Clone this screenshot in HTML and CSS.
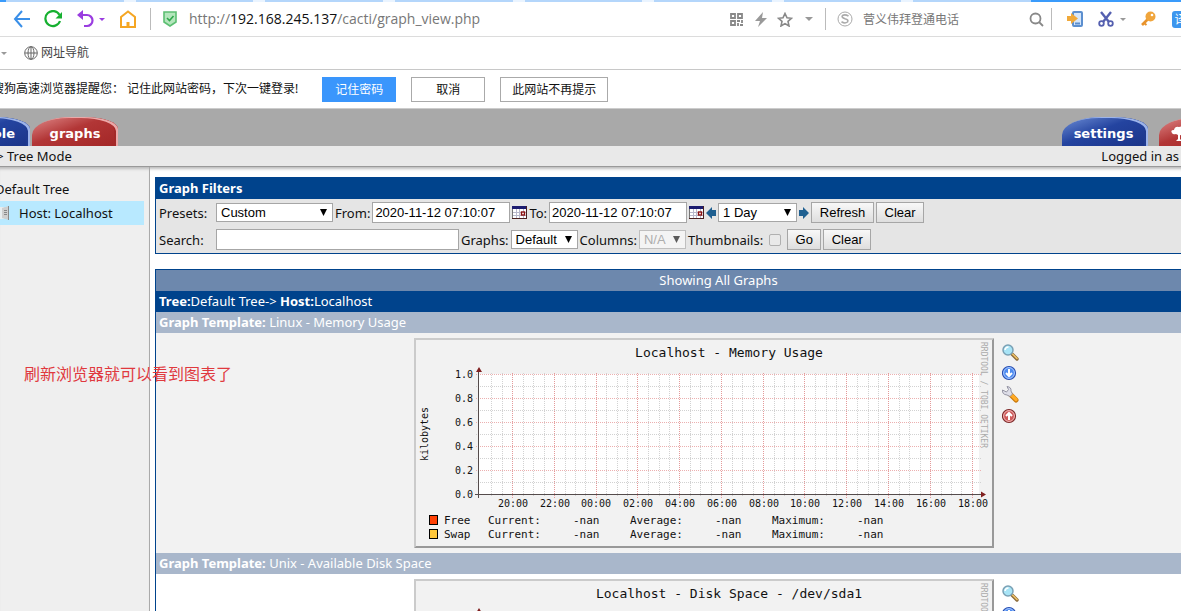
FILE: index.html
```html
<!DOCTYPE html>
<html lang="zh-CN">
<head>
<meta charset="utf-8">
<title>Cacti - graph_view.php</title>
<link rel="stylesheet" href="styles.css">
</head>
<body>
<svg class="defs" aria-hidden="true">
  <defs>
    <g id="chart-frame">
      <rect width="580" height="210" fill="#f2f2f2"/>
      <path d="M0 0H580L578 2H2V208L0 210Z" fill="#cbcbcb"/>
      <path d="M580 0V210H0L2 208H578V2Z" fill="#999"/>
    </g>
    <g id="chart-grid">
      <rect x="65" y="36" width="500" height="121" fill="#fff"/>
      <path d="M62 48.5H568M62 72.5H568M62 96.5H568M62 120.5H568M62 144.5H568" stroke="#d2d2d2" stroke-dasharray="1 1"/>
      <path d="M77.5 35V158M88.5 35V158M109.5 35V158M119.5 35V158M130.5 35V158M151.5 35V158M161.5 35V158M171.5 35V158M192.5 35V158M203.5 35V158M213.5 35V158M234.5 35V158M245.5 35V158M255.5 35V158M276.5 35V158M286.5 35V158M297.5 35V158M318.5 35V158M328.5 35V158M339.5 35V158M360.5 35V158M370.5 35V158M380.5 35V158M401.5 35V158M412.5 35V158M422.5 35V158M443.5 35V158M454.5 35V158M464.5 35V158M485.5 35V158M495.5 35V158M506.5 35V158M527.5 35V158M537.5 35V158M547.5 35V158" stroke="#d2d2d2" stroke-dasharray="1 1"/>
      <path d="M62 36.5H568M62 60.5H568M62 84.5H568M62 108.5H568M62 132.5H568" stroke="#ecb0b0" stroke-dasharray="1 1"/>
      <path d="M98.5 35V160M140.5 35V160M182.5 35V160M223.5 35V160M265.5 35V160M307.5 35V160M349.5 35V160M390.5 35V160M432.5 35V160M474.5 35V160M516.5 35V160M558.5 35V160" stroke="#e49a9a" stroke-dasharray="1 1"/>
      <path d="M64.5 34V160M61 156.5H569" stroke="#554c4c"/>
      <path d="M62 34L65 29L68 34ZM567 153.5L572 156.5L567 159.5Z" fill="#802020"/>
    </g>
    <g id="ico-zoom">
      <path d="M10 10L15 15" stroke="#8a6a3a" stroke-width="3.4" stroke-linecap="round"/>
      <path d="M10.5 10L15 14.5" stroke="#f0c468" stroke-width="1.6" stroke-linecap="round"/>
      <circle cx="6" cy="6" r="5" fill="#a8e4f6" stroke="#7aa0b4" stroke-width="1.5"/>
      <path d="M3 6Q3.5 3 6.5 3" stroke="#fff" stroke-width="1.5" fill="none"/>
    </g>
    <g id="ico-down">
      <circle cx="7" cy="8" r="6.5" fill="#4f8cf0" stroke="#2a4fb0" stroke-width="1.2"/>
      <circle cx="7" cy="8" r="5.4" fill="none" stroke="#a9c8ff"/>
      <path d="M7 4V11M4 8L7 11L10 8" stroke="#fff" stroke-width="2" fill="none"/>
    </g>
    <g id="ico-wrench">
      <path d="M9 9L14 14" stroke="#c9780c" stroke-width="5" stroke-linecap="round"/>
      <path d="M9.500 9L14 13.500" stroke="#ffab25" stroke-width="3.2" stroke-linecap="round"/>
      <path d="M0.500 4Q0 8.500 5 9L8 10.500L10.500 8L9 5Q9.500 1 5 0.500L6.500 3.500L4.500 6Z" fill="#dedee8" stroke="#8c8c9c" stroke-width=".9"/>
    </g>
    <g id="ico-up">
      <circle cx="7" cy="9" r="6.5" fill="#cf5a5a" stroke="#7c2a2a" stroke-width="1.2"/>
      <circle cx="7" cy="9" r="5.4" fill="none" stroke="#f1baba"/>
      <path d="M7 13V6M4 9L7 6L10 9" stroke="#fff" stroke-width="2" fill="none"/>
    </g>
    <g id="ico-cal">
      <rect x=".5" y=".5" width="14" height="12" fill="#fff" stroke="#777"/>
      <path d="M0 0H15V3H0Z" fill="#1d1d70"/>
      <path d="M1 6.5H14M1 9.5H14M4.5 3V12M7.5 3V12M11.5 3V12" stroke="#b9b9cc"/>
      <rect x="9.5" y="6" width="3" height="3" fill="#fff" stroke="#8b1010" stroke-width="1.4"/>
      <path d="M14.5 0V13M0 12.5H15" stroke="#4a2020"/>
    </g>
  </defs>
</svg>

<header class="browser">
  <div class="strip"><i class="st-on st-first"></i><i></i><i></i><i></i><i></i><i></i><i></i><i></i><i></i><i class="st-on st-last"></i></div>
  <div class="toolbar">
    <button class="tb" aria-label="Back"><svg width="17" height="18" viewBox="0 0 17 18" fill="none" stroke="#3a8fe8" stroke-width="2"><path d="M9 1L2 9L9 17M2 9H17"/></svg></button>
    <button class="tb tb-reload" aria-label="Reload"><svg width="18" height="18" viewBox="0 0 18 18"><path d="M15.5 5A7.5 7.5 0 1 0 16 11" fill="none" stroke="#16b030" stroke-width="2.2"/><path d="M18 2V8.5H11.5Z" fill="#16b030"/></svg></button>
    <button class="tb tb-undo" aria-label="Undo"><svg width="17" height="18" viewBox="0 0 17 18"><path d="M3 5H10A5.5 5.5 0 0 1 10 16H7" fill="none" stroke="#9a3de0" stroke-width="2.2"/><path d="M0 5L6 0V10Z" fill="#9a3de0"/></svg></button>
    <i class="caret caret-purple"></i>
    <button class="tb tb-home" aria-label="Home"><svg width="16" height="18" viewBox="0 0 16 18" fill="none" stroke="#f5a623" stroke-width="2"><path d="M1 7L8 1.5L15 7V17H1Z"/><path d="M8 17V12" stroke-width="3"/></svg></button>
    <i class="sep sep-a"></i>
    <svg class="shield" width="14" height="16" viewBox="0 0 14 16"><path d="M1 1H13V11L7 15L1 11Z" fill="#b4e6bc" stroke="#5cbf72" stroke-width="1.6"/><path d="M4 7L6.5 9.5L10.5 5" fill="none" stroke="#2fa84c" stroke-width="1.6"/></svg>
    <div class="url"><span>http://</span><b>192.168.245.137</b><span>/cacti/graph_view.php</span></div>
    <div class="tools">
      <button class="tb" aria-label="QR code"><svg width="13" height="13" viewBox="0 0 13 13" fill="none" stroke="#888" stroke-width="1.8"><path d="M1 1H5V5H1ZM8 1H12V5H8ZM1 8H5V12H1Z"/><path d="M7 8H10M12 7V10M8 10V13M10 12H13"/></svg></button>
      <button class="tb tb-bolt" aria-label="Fast mode"><svg width="12" height="15" viewBox="0 0 12 15"><path d="M8 0L0 9H5L3 15L12 6H7Z" fill="#999"/></svg></button>
      <button class="tb tb-star" aria-label="Favourite"><svg width="16" height="15" viewBox="0 0 16 15"><path d="M8 1.5L10 5.8L14.5 6.3L11 9.4L12 14L8 11.6L4 14L5 9.4L1.5 6.3L6 5.8Z" fill="none" stroke="#888" stroke-width="1.6"/></svg></button>
      <i class="caret caret-big"></i>
      <i class="sep"></i>
      <label class="search"><svg width="16" height="16" viewBox="0 0 16 16" fill="none" stroke="#aaa"><circle cx="8" cy="8" r="7"/><path d="M11.5 5Q8 3 5.5 4.5Q4 6.5 8 7.7Q12 8.8 10.5 11Q8 13 4.5 10.8" stroke-width="1.6"/></svg><input type="text" value="菅义伟拜登通电话" aria-label="Search the web"></label>
      <button class="tb" aria-label="Search"><svg width="15" height="15" viewBox="0 0 15 15" fill="none" stroke="#888" stroke-width="1.8"><circle cx="6.5" cy="6.5" r="5"/><path d="M10 10L14 14"/></svg></button>
      <i class="sep sep-b"></i>
      <button class="tb tb-phone" aria-label="Send to phone"><svg width="18" height="18" viewBox="0 0 18 18"><rect x="7" y="2" width="9" height="14" rx="1" fill="#d5e6fa" stroke="#5c8fcf" stroke-width="2"/><path d="M9 13.5H14" stroke="#5c8fcf" stroke-width="2"/><path d="M1 6H5V3L12 8.5L5 14V11H1Z" fill="#f0a93a"/></svg></button>
      <button class="tb tb-cut" aria-label="Screenshot"><svg width="16" height="16" viewBox="0 0 16 16" fill="none" stroke="#5560b0" stroke-width="1.8"><path d="M3 1L11 11M13 1L5 11" stroke-width="2.4"/><circle cx="3.5" cy="12.5" r="2.3"/><circle cx="12.5" cy="12.5" r="2.3"/></svg></button>
      <i class="caret"></i>
      <button class="tb tb-key" aria-label="Passwords"><svg width="16" height="16" viewBox="0 0 16 16"><path d="M2 14L9 7" stroke="#e8932c" stroke-width="2.6"/><path d="M4 12L6.5 14" stroke="#e8932c" stroke-width="2"/><circle cx="10.5" cy="5.5" r="5" fill="#f0a53c"/><circle cx="12" cy="4" r="1.3" fill="#fff"/></svg></button>
      <button class="trans" aria-label="Translate">译</button>
    </div>
  </div>
  <nav class="bookmarks"><i class="caret"></i>
    <a href="#"><svg width="14" height="14" viewBox="0 0 14 14" fill="none" stroke="#666"><circle cx="7" cy="7" r="6.3"/><ellipse cx="7" cy="7" rx="3" ry="6.3"/><path d="M7 1V13M1 7H13"/></svg>网址导航</a>
  </nav>
  <div class="notice">
    <p>搜狗高速浏览器提醒您： 记住此网站密码，下次一键登录!</p>
    <button class="primary">记住密码</button><button>取消</button><button class="wide">此网站不再提示</button>
  </div>
</header>

<nav class="tabs">
  <a class="tab blue tab-console" href="#">console</a><a class="tab red tab-graphs" href="#">graphs</a>
  <a class="tab blue tab-settings" href="#">settings</a><a class="tab red tab-tree" href="#" aria-label="Tree view"><svg width="22" height="16" viewBox="0 0 22 16"><path d="M1 7Q-1 4 3 4Q4 0 8 1Q13 -1 14 3Q19 4 16 8Q13 10 9 9V13L11 15H5L7 13V9L5 8Q2 9 1 7Z" fill="#fff"/></svg></a>
</nav>
<div class="crumbs"><span class="crumb">-&gt; Tree Mode</span><span class="logged">Logged in as</span></div>

<div class="page">
  <aside class="side">
    <a class="node" href="#">Default Tree</a>
    <a class="node active" href="#"><svg width="12" height="14" viewBox="0 0 12 14"><path d="M0 1H5V13H0Z" fill="#e9eef0"/><path d="M3 2L10 0V14L3 12Z" fill="#cfcfcf"/><path d="M9.5 0V14" stroke="#8a8a8a"/><path d="M5 4.5H8M5 6.5H8M5 8.5H8" stroke="#888"/></svg>Host: Localhost</a>
  </aside>
  <main class="main">
    <form class="filters">
      <h2>Graph Filters</h2>
      <div class="row">
        <label class="first" for="presets">Presets:</label>
        <select id="presets" class="sel-preset"><option>Custom</option></select>
        <label for="from">From:</label>
        <input id="from" class="date" type="text" value="2020-11-12 07:10:07">
        <svg class="cal" width="15" height="13"><use href="#ico-cal"/></svg>
        <label for="to">To:</label>
        <input id="to" class="date" type="text" value="2020-11-12 07:10:07">
        <svg class="cal" width="15" height="13"><use href="#ico-cal"/></svg>
        <svg class="arrow" width="10" height="12" viewBox="0 0 10 12"><path d="M0 6L6 0V3H10V9H6V12Z" fill="#1f6091"/></svg>
        <select class="sel-day" aria-label="Time span"><option>1 Day</option></select>
        <svg class="arrow" width="10" height="12" viewBox="0 0 10 12"><path d="M10 6L4 0V3H0V9H4V12Z" fill="#1f6091"/></svg>
        <button type="button" class="refresh">Refresh</button>
        <button type="button" class="clear">Clear</button>
      </div>
      <div class="row">
        <label class="first" for="find">Search:</label>
        <input id="find" class="find" type="text">
        <label for="count">Graphs:</label>
        <select id="count" class="sel-count"><option>Default</option></select>
        <label for="cols">Columns:</label>
        <select id="cols" class="sel-cols" disabled><option>N/A</option></select>
        <label for="thumbs">Thumbnails:</label>
        <input id="thumbs" type="checkbox">
        <button type="button" class="go">Go</button>
        <button type="button" class="clear">Clear</button>
      </div>
    </form>

    <section class="graphs">
      <div class="showing">Showing All Graphs</div>
      <div class="path"><b>Tree:</b>Default Tree-&gt; <b>Host:</b>Localhost</div>
      <div class="template"><b>Graph Template:</b> Linux - Memory Usage</div>
      <div class="graph-row shade">
        <svg class="chart" width="580" height="210" viewBox="0 0 580 210">
          <use href="#chart-frame"/><use href="#chart-grid"/>
          <text class="c-title" x="315" y="19">Localhost - Memory Usage</text>
          <g class="c-y"><text x="59" y="40">1.0</text><text x="59" y="64">0.8</text><text x="59" y="88">0.6</text><text x="59" y="112">0.4</text><text x="59" y="136">0.2</text><text x="59" y="160">0.0</text></g>
          <g class="c-x"><text x="99" y="169">20:00</text><text x="141" y="169">22:00</text><text x="182" y="169">00:00</text><text x="224" y="169">02:00</text><text x="266" y="169">04:00</text><text x="308" y="169">06:00</text><text x="350" y="169">08:00</text><text x="391" y="169">10:00</text><text x="433" y="169">12:00</text><text x="475" y="169">14:00</text><text x="517" y="169">16:00</text><text x="559" y="169">18:00</text></g>
          <text class="c-unit" transform="translate(14 96) rotate(-90)">kilobytes</text>
          <text class="c-mark" transform="translate(567 4) rotate(90)">RRDTOOL / TOBI OETIKER</text>
          <rect x="15.5" y="177.5" width="8" height="9" fill="#ff4105" stroke="#000"/>
          <rect x="15.5" y="191.5" width="8" height="9" fill="#ffc73b" stroke="#000"/>
          <g class="c-leg"><text x="30" y="186">Free</text><text x="74" y="186">Current:</text><text x="159" y="186">-nan</text><text x="216" y="186">Average:</text><text x="301" y="186">-nan</text><text x="358" y="186">Maximum:</text><text x="443" y="186">-nan</text>
          <text x="30" y="200">Swap</text><text x="74" y="200">Current:</text><text x="159" y="200">-nan</text><text x="216" y="200">Average:</text><text x="301" y="200">-nan</text><text x="358" y="200">Maximum:</text><text x="443" y="200">-nan</text></g>
        </svg>
        <div class="acts">
          <a href="#" aria-label="Zoom graph"><svg width="17" height="17"><use href="#ico-zoom"/></svg></a>
          <a href="#" aria-label="CSV export"><svg width="17" height="17"><use href="#ico-down"/></svg></a>
          <a href="#" aria-label="Graph properties"><svg width="17" height="17"><use href="#ico-wrench"/></svg></a>
          <a href="#" aria-label="Page top"><svg width="17" height="17"><use href="#ico-up"/></svg></a>
        </div>
      </div>
      <div class="template"><b>Graph Template:</b> Unix - Available Disk Space</div>
      <div class="graph-row">
        <svg class="chart" width="580" height="210" viewBox="0 0 580 210">
          <use href="#chart-frame"/><use href="#chart-grid"/>
          <text class="c-title" x="315" y="19">Localhost - Disk Space - /dev/sda1</text>
          <text class="c-mark" transform="translate(567 4) rotate(90)">RRDTOOL / TOBI OETIKER</text>
        </svg>
        <div class="acts">
          <a href="#" aria-label="Zoom graph"><svg width="17" height="17"><use href="#ico-zoom"/></svg></a>
          <a href="#" aria-label="CSV export"><svg width="17" height="17"><use href="#ico-down"/></svg></a>
        </div>
      </div>
    </section>
  </main>
</div>
<div class="note">刷新浏览器就可以看到图表了</div>
</body>
</html>
```
FILE: styles.css
```css
* { box-sizing: border-box; }
body {
  margin: 0;
  height: 100vh;
  overflow: hidden;
  position: relative;
  display: flex;
  flex-direction: column;
  background: #fff;
  color: #111;
  font: 13px/20px "Noto Sans", "Noto Sans CJK SC", sans-serif;
}
a { color: inherit; text-decoration: none; }
button, input, select { margin: 0; border-radius: 0; }
svg { display: block; flex: none; }
.defs { position: absolute; width: 0; height: 0; }

/* browser chrome */
.browser { flex: none; background: #fff; font-size: 12px; }
.strip { display: flex; height: 2px; gap: 12px; overflow: hidden; background: #eaf4ff; }
.strip i { flex: 1; background: #b4d6fb; }
.strip .st-on { background: #3a9bfb; }
.strip .st-first { flex: 0 0 6px; margin-right: -12px; }
.strip .st-last { flex: 0 0 150px; margin-left: -12px; }
.toolbar {
  display: flex;
  align-items: center;
  height: 35px;
  padding-left: 13px;
  border-bottom: 1px solid #dcdcdc;
}
.tb { flex: none; padding: 0; border: 0; background: none; }
.tb-reload { margin-left: 14px; }
.tb-undo { margin-left: 15px; }
.tb-home { margin-left: 15px; }
.caret {
  flex: none;
  border: 3px solid transparent;
  border-top-color: #999;
  border-bottom: 0;
}
.caret-purple { margin-left: 5px; border-top-color: #9a3de0; }
.caret-big { border-width: 4px 4px 0; margin: 0 12px; }
.sep { flex: none; width: 1px; height: 22px; background: #bbb; }
.sep-a { margin: 0 12px 0 14px; }
.url {
  flex: 1;
  min-width: 0;
  margin-left: 12px;
  font: 14px/20px "Open Sans", sans-serif;
  color: #777;
}
.url b { font-weight: 400; color: #111; }
.tools { flex: none; display: flex; align-items: center; margin-right: -8px; }
.tb-bolt { margin-left: 12px; }
.tb-star { margin: 0 0 0 10px; }
.search { display: flex; align-items: center; gap: 10px; margin-left: 11px; }
.search input {
  width: 166px;
  padding: 0;
  border: 0;
  outline: 0;
  background: none;
  color: #777;
  font: 12px/18px "Noto Sans CJK SC", sans-serif;
}
.sep-b { margin: 0 14px 0 7px; }
.tb-cut { margin: 0 6px 0 14px; }
.tb-key { margin: 0 16px 0 14px; }
.trans {
  width: 17px;
  height: 17px;
  padding: 0;
  border: 0;
  border-radius: 3px;
  background: #3d96ee;
  color: #fff;
  font: 12px/16px "Noto Sans CJK SC", sans-serif;
}
.bookmarks {
  display: flex;
  align-items: center;
  gap: 17px;
  height: 33px;
  padding-left: 1px;
  border-bottom: 1px solid #c8c8c8;
}
.bookmarks a { display: flex; align-items: center; gap: 3px; color: #444; }
.notice {
  display: flex;
  align-items: center;
  height: 39px;
  border-bottom: 1px solid #ccc;
  white-space: nowrap;
}
.notice p { margin: 0 24px 0 -8px; }
.notice button {
  width: 74px;
  height: 25px;
  margin-right: 15px;
  padding: 0;
  border: 1px solid #aaa;
  background: #fff;
  color: #111;
  font: 12px/20px "Noto Sans CJK SC", sans-serif;
}
.notice .wide { width: 108px; }
.notice .primary { border-color: #3a96fc; background: #3a96fc; color: #fff; }

/* application tabs */
.tabs {
  flex: none;
  display: flex;
  align-items: flex-end;
  height: 37px;
  overflow: hidden;
  background: #a9a9a9;
}
.tab {
  flex: none;
  height: 29px;
  border-radius: 40px 34px 0 0 / 18px 12px 0 0;
  color: #fff;
  font: bold 13px/33px "DejaVu Sans", sans-serif;
  text-align: center;
}
.blue {
  background: linear-gradient(160deg, #6f8fd6, #2444a0 45%, #1b3488);
  box-shadow: inset -3px 2px 0 -1px #9db4ea, inset -5px 0 0 -1px #1f3a90;
}
.red {
  background: linear-gradient(160deg, #e08a8a, #b23636 45%, #a32626);
  box-shadow: inset -3px 2px 0 -1px #eba9a9, inset -5px 0 0 -1px #a32828;
}
.tab-console { width: 86px; margin-left: -56px; padding-right: 15px; text-align: right; }
.tab-graphs { width: 86px; margin-left: 2px; }
.tab-settings { width: 86px; margin-left: auto; padding-right: 3px; }
.tab-tree { width: 86px; margin: 0 -64px 0 11px; padding: 9px 0 0 12px; }

.crumbs {
  flex: none;
  display: flex;
  justify-content: space-between;
  height: 21px;
  line-height: 21px;
  padding-right: 2px;
  background: #e9e9e9;
  border-bottom: 1px solid #999;
}
.crumb { margin-left: -8px; }

.page { flex: 1; display: flex; min-height: 0; box-shadow: inset 0 4px 3px -2px #bbb; }
.side {
  flex: none;
  width: 150px;
  padding-top: 10px;
  background: #efefef;
  border-right: 1px solid #aaa;
  box-shadow: inset 0 4px 3px -2px #bbb;
  overflow: hidden;
}
.node {
  display: flex;
  align-items: center;
  gap: 8px;
  height: 24px;
  margin-right: 5px;
  white-space: nowrap;
  text-indent: -5px;
}
.node.active { background: #b8e9ff; text-indent: 0; }
.node.active svg { margin-left: -1px; }

/* the report area runs on past the right edge of the window */
.main { flex: 1; min-width: 0; padding: 10px 0 0 5px; margin-right: -101px; }
.filters {
  border: 1px solid #00438c;
  background: #e5e5e5;
}
.filters h2 {
  margin: 0;
  padding: 0 3px;
  background: #00438c;
  color: #fff;
  font: bold 13px/21px "Noto Sans", sans-serif;
}
.row {
  display: flex;
  align-items: center;
  gap: 2px;
  height: 27px;
  padding-left: 3px;
}
.row label { flex: none; }
.row .first { width: 55px; }
.row input[type="text"], .row select {
  height: 21px;
  border: 1px solid #a6a6a6;
  background: #fff;
  color: #000;
  font: 13px/17px "Liberation Sans", Arial, sans-serif;
}
.row input[type="text"] { padding: 0 2px; }
.row select {
  appearance: none;
  height: 19px;
  padding: 0 4px;
  background: #fff url("data:image/svg+xml,%3Csvg xmlns='http://www.w3.org/2000/svg' width='7' height='7'%3E%3Cpath d='M0 0H7L3.5 7Z'/%3E%3C/svg%3E") no-repeat right 5px center;
}
.row select:disabled { color: #888; opacity: .6; }
.row .sel-preset { width: 117px; }
.row .date { width: 138px; }
.row .sel-day { width: 79px; }
.row .find { width: 243px; }
.row .sel-count { width: 67px; }
.row .sel-cols { width: 47px; }
.row input[type="checkbox"] {
  appearance: none;
  width: 12px;
  height: 12px;
  margin: 0 4px;
  border: 1px solid #b0b0b0;
  border-radius: 2px;
  background: #e9e9e9;
}
.row button {
  height: 21px;
  padding: 0;
  border: 1px solid #a6a6a6;
  background: linear-gradient(#f8f8f8, #dedede);
  color: #000;
  font: 13px/17px "Liberation Sans", Arial, sans-serif;
}
.row .refresh { width: 63px; }
.row .clear { width: 48px; }
.row .go { width: 34px; }

.graphs { margin-top: 15px; border: 1px solid #00438c; }
.showing { background: #6d88ad; color: #fff; line-height: 21px; text-align: center; }
.path { padding: 0 3px; background: #00438c; color: #fff; line-height: 21px; }
.template { padding: 0 3px; background: #a9b7cb; color: #fff; line-height: 21px; }
.graph-row {
  display: flex;
  justify-content: center;
  gap: 8px;
  padding: 5px 0;
  background: #fff;
}
.graph-row.shade { background: #f2f2f2; }
.acts { display: flex; flex-direction: column; gap: 4px; width: 22px; padding-top: 6px; }

.chart text { font-family: "DejaVu Sans Mono", monospace; fill: #111; }
.chart .c-title { font-size: 13px; text-anchor: middle; }
.c-y { font-size: 10px; text-anchor: end; }
.c-x { font-size: 10px; text-anchor: middle; }
.chart .c-unit { font-size: 10px; text-anchor: middle; }
.chart .c-mark { font-size: 8px; fill: #aaa; }
.c-leg { font-size: 11px; }

.note {
  position: absolute;
  left: 24px;
  top: 361px;
  color: #e0393e;
  font: 16px/24px "Noto Sans CJK SC", sans-serif;
}
```
